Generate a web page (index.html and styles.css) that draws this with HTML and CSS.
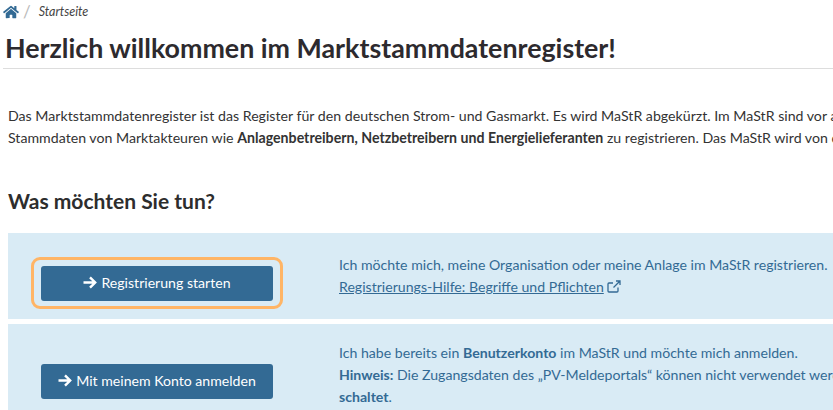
FILE: index.html
```html
<!DOCTYPE html>
<html lang="de">
<head>
<meta charset="utf-8">
<title>Marktstammdatenregister</title>
<link rel="stylesheet" href="styles.css">
</head>
<body>
<nav class="crumbs">
  <svg class="home" viewBox="0 0 576 512" aria-hidden="true"><path d="M280 148 96 300v164a16 16 0 0 0 16 16l112-.3a16 16 0 0 0 16-16V368a16 16 0 0 1 16-16h64a16 16 0 0 1 16 16v95.6a16 16 0 0 0 16 16.4l112 .3a16 16 0 0 0 16-16V300L296 148a12 12 0 0 0-16 0zM572 251l-84-69V44a12 12 0 0 0-12-12h-56a12 12 0 0 0-12 12v72l-89-74a48 48 0 0 0-61 0L4 251a12 12 0 0 0-2 17l26 31a12 12 0 0 0 17 2L280 107a12 12 0 0 1 16 0l235 194a12 12 0 0 0 17-2l26-31a12 12 0 0 0-2-17z"/></svg>
  <span class="sep">/</span>
  <em class="current">Startseite</em>
</nav>
<h1 class="title">Herzlich willkommen im Marktstammdatenregister!</h1>
<main class="content">
  <p class="intro">Das Marktstammdatenregister ist das Register für den deutschen Strom- und Gasmarkt. Es wird MaStR abgekürzt. Im MaStR sind vor allem die<br>Stammdaten von Marktakteuren wie <strong>Anlagenbetreibern, Netzbetreibern und Energielieferanten</strong> zu registrieren. Das MaStR wird von der Bundesnetzagentur</p>
  <h2 class="question">Was möchten Sie tun?</h2>
  <section class="panel first">
    <div class="action">
      <a class="btn focused" href="#"><svg class="arrow" viewBox="0 0 14 13" aria-hidden="true"><path d="M.500 6.500h11.500M7 1.300l5.200 5.200L7 11.700"/></svg>Registrierung starten</a>
    </div>
    <div class="desc">
      <p>Ich möchte mich, meine Organisation oder meine Anlage im MaStR registrieren.</p>
      <p><a class="link" href="#">Registrierungs-Hilfe: Begriffe und Pflichten</a> <svg class="ext" viewBox="0 0 14 13" aria-hidden="true"><path d="M11 7.500V11a1 1 0 0 1-1 1H2a1 1 0 0 1-1-1V4a1 1 0 0 1 1-1h4M9 1h4v4M13 1 6.500 7.500"/></svg></p>
    </div>
  </section>
  <section class="panel second">
    <div class="action">
      <a class="btn" href="#"><svg class="arrow" viewBox="0 0 14 13" aria-hidden="true"><path d="M.500 6.500h11.500M7 1.300l5.200 5.200L7 11.700"/></svg>Mit meinem Konto anmelden</a>
    </div>
    <div class="desc">
      <p>Ich habe bereits ein <strong>Benutzerkonto</strong> im MaStR und möchte mich anmelden.</p>
      <p><strong>Hinweis:</strong> Die Zugangsdaten des „PV-Meldeportals“ können nicht verwendet werden, die Anmeldung wurde ab</p>
      <p><strong>schaltet</strong>.</p>
    </div>
  </section>
</main>
</body>
</html>
```
FILE: styles.css
```css
html, body { margin: 0; padding: 0; height: 410px; overflow: hidden; background: #fff; }
body { font-family: Lato, "Noto Sans", sans-serif; font-size: 14px; color: #2b2b2b; width: 833px; }
p { margin: 0; }
.crumbs { display: flex; align-items: center; height: 23px; padding-left: 3px; font-size: 12.500px; color: #555; }
.home { width: 16px; height: 14px; fill: #336a94; }
.sep { margin: 0 8px 0 4px; color: #bbb; font-size: 17px; }
.current { color: #444; }
.title { margin: 0 0 0 3px; padding: 10px 0 0 2px; height: 35px; font-size: 26.800px; line-height: 30px; font-weight: 700; color: #2d2a2e; border-bottom: 1px solid #ddd; white-space: nowrap; }
.content { padding-left: 8px; }
.intro { margin-top: 36px; font-size: 14.170px; line-height: 22px; white-space: nowrap; color: #333; }
.question { margin: 38px 0 19px; font-size: 21px; line-height: 27px; font-weight: 700; color: #2d2d2d; }
.panel { display: flex; background: #d9ebf5; width: 825px; color: #336a94; font-size: 14.120px; line-height: 22px; white-space: nowrap; }
.first { height: 86px; margin-bottom: 5px; }
.second { height: 90px; }
.action { width: 331px; flex: none; padding-left: 33px; box-sizing: border-box; }
.first .action { padding-top: 33px; }
.second .action { padding-top: 40px; }
.first .desc { padding-top: 21px; }
.second .desc { padding-top: 18px; }
.btn { position: relative; display: flex; align-items: center; justify-content: center; box-sizing: border-box; width: 232px; height: 35px; padding-bottom: 2px; background: #336a94; color: #fff; border-radius: 3px; text-decoration: none; font-size: 14.100px; }
.focused::after { content: ""; position: absolute; top: -9px; right: -10px; bottom: -8px; left: -10px; border: 3.500px solid #ffb566; border-radius: 9px; }
.arrow { width: 14px; height: 13px; margin-right: 4px; fill: none; stroke: #fff; stroke-width: 2.400; }
.link { color: #336a94; text-decoration: underline; }
.ext { width: 14px; height: 13px; fill: none; stroke: #336a94; stroke-width: 1.300; vertical-align: -1px; }
```
